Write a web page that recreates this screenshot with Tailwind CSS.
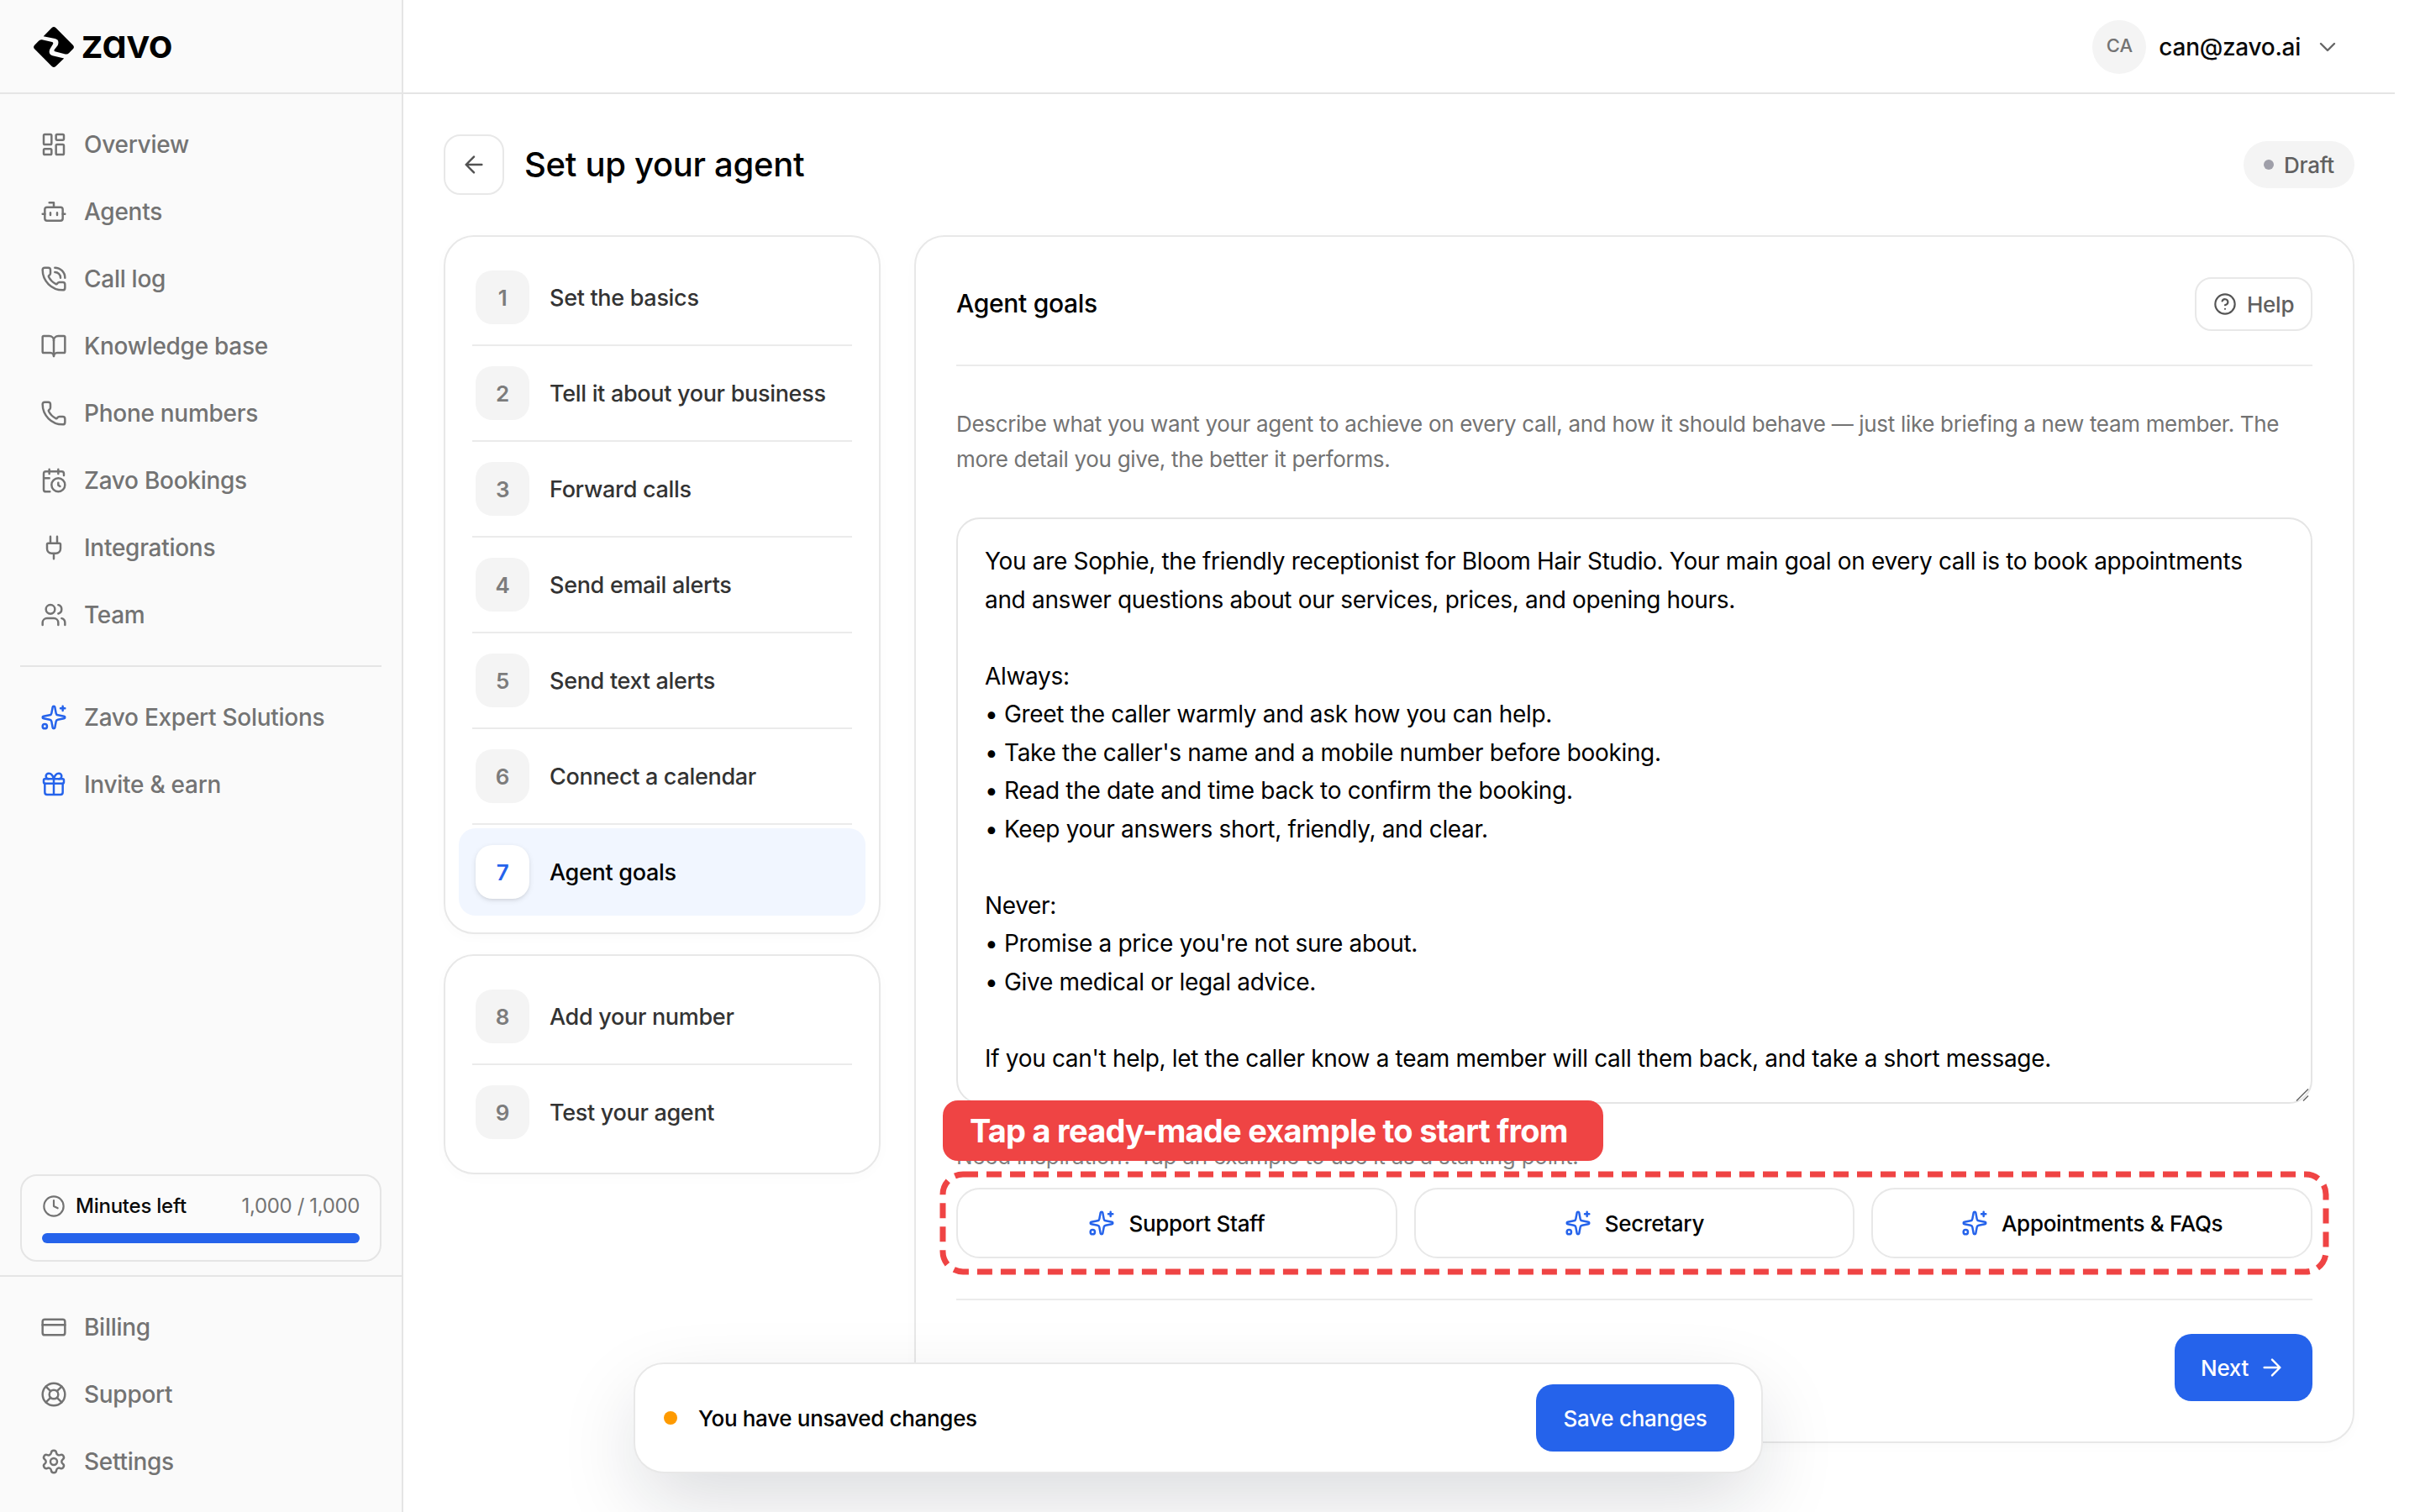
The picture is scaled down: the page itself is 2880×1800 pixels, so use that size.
<!DOCTYPE html>
<html lang="en">
<head>
<meta charset="utf-8">
<title>Zavo – Set up your agent</title>
<script src="https://cdn.jsdelivr.net/npm/@tailwindcss/browser@4"></script>
</head>
<body class="bg-white font-['Inter',sans-serif] text-[#0a0a0a] antialiased">
<!-- Icon sprite -->
<svg class="hidden" xmlns="http://www.w3.org/2000/svg">
  <symbol id="dashboard" viewBox="0 0 24 24"><rect x="3" y="3" width="7" height="9" rx="1"/><rect x="14" y="3" width="7" height="5" rx="1"/><rect x="14" y="12" width="7" height="9" rx="1"/><rect x="3" y="16" width="7" height="5" rx="1"/></symbol>
  <symbol id="bot" viewBox="0 0 24 24"><path d="M12 8V4H8"/><rect x="4" y="8" width="16" height="12" rx="2"/><path d="M2 14h2M20 14h2M15 13v2M9 13v2"/></symbol>
  <symbol id="phone" viewBox="0 0 24 24"><path d="M13.832 16.568a1 1 0 0 0 1.213-.303l.355-.465A2 2 0 0 1 17 15h3a2 2 0 0 1 2 2v3a2 2 0 0 1-2 2A18 18 0 0 1 2 4a2 2 0 0 1 2-2h3a2 2 0 0 1 2 2v3a2 2 0 0 1-.8 1.6l-.468.351a1 1 0 0 0-.292 1.233 14 14 0 0 0 6.392 6.384"/></symbol>
  <symbol id="phone-call" viewBox="0 0 24 24"><path d="M13 2a9 9 0 0 1 9 9M13 6a5 5 0 0 1 5 5"/><path d="M13.832 16.568a1 1 0 0 0 1.213-.303l.355-.465A2 2 0 0 1 17 15h3a2 2 0 0 1 2 2v3a2 2 0 0 1-2 2A18 18 0 0 1 2 4a2 2 0 0 1 2-2h3a2 2 0 0 1 2 2v3a2 2 0 0 1-.8 1.6l-.468.351a1 1 0 0 0-.292 1.233 14 14 0 0 0 6.392 6.384"/></symbol>
  <symbol id="book" viewBox="0 0 24 24"><path d="M12 7v14"/><path d="M3 18a1 1 0 0 1-1-1V4a1 1 0 0 1 1-1h5a4 4 0 0 1 4 4 4 4 0 0 1 4-4h5a1 1 0 0 1 1 1v13a1 1 0 0 1-1 1h-6a3 3 0 0 0-3 3 3 3 0 0 0-3-3z"/></symbol>
  <symbol id="calendar" viewBox="0 0 24 24"><path d="M16 14v2.2l1.6 1M16 2v4M21 7.5V6a2 2 0 0 0-2-2H5a2 2 0 0 0-2 2v14a2 2 0 0 0 2 2h3.5M3 10h5M8 2v4"/><circle cx="16" cy="16" r="6"/></symbol>
  <symbol id="plug" viewBox="0 0 24 24"><path d="M12 22v-5M15 8V2M17 8a1 1 0 0 1 1 1v4a4 4 0 0 1-4 4h-4a4 4 0 0 1-4-4V9a1 1 0 0 1 1-1zM9 8V2"/></symbol>
  <symbol id="users" viewBox="0 0 24 24"><path d="M16 21v-2a4 4 0 0 0-4-4H6a4 4 0 0 0-4 4v2M16 3.128a4 4 0 0 1 0 7.744M22 21v-2a4 4 0 0 0-3-3.87"/><circle cx="9" cy="7" r="4"/></symbol>
  <symbol id="sparkles" viewBox="0 0 24 24"><path d="M11.017 2.814a1 1 0 0 1 1.966 0l1.051 5.558a2 2 0 0 0 1.594 1.594l5.558 1.051a1 1 0 0 1 0 1.966l-5.558 1.051a2 2 0 0 0-1.594 1.594l-1.051 5.558a1 1 0 0 1-1.966 0l-1.051-5.558a2 2 0 0 0-1.594-1.594l-5.558-1.051a1 1 0 0 1 0-1.966l5.558-1.051a2 2 0 0 0 1.594-1.594z"/><path d="M20 2v4M22 4h-4"/><circle cx="4" cy="20" r="2"/></symbol>
  <symbol id="gift" viewBox="0 0 24 24"><path d="M12 7v14M20 11v8a2 2 0 0 1-2 2H6a2 2 0 0 1-2-2v-8M7.5 7a1 1 0 0 1 0-5A4.8 8 0 0 1 12 7a4.8 8 0 0 1 4.5-5 1 1 0 0 1 0 5"/><rect x="3" y="7" width="18" height="4" rx="1"/></symbol>
  <symbol id="clock" viewBox="0 0 24 24"><circle cx="12" cy="12" r="10"/><path d="M12 6v6l4 2"/></symbol>
  <symbol id="card" viewBox="0 0 24 24"><rect x="2" y="5" width="20" height="14" rx="2"/><path d="M2 10h20"/></symbol>
  <symbol id="buoy" viewBox="0 0 24 24"><circle cx="12" cy="12" r="10"/><path d="m4.93 4.93 4.24 4.24M14.83 9.17l4.24-4.24M14.83 14.83l4.24 4.24M9.17 14.83l-4.24 4.24"/><circle cx="12" cy="12" r="4"/></symbol>
  <symbol id="settings" viewBox="0 0 24 24"><path d="M9.671 4.136a2.34 2.34 0 0 1 4.659 0 2.34 2.34 0 0 0 3.319 1.915 2.34 2.34 0 0 1 2.33 4.033 2.34 2.34 0 0 0 0 3.831 2.34 2.34 0 0 1-2.33 4.033 2.34 2.34 0 0 0-3.319 1.915 2.34 2.34 0 0 1-4.659 0 2.34 2.34 0 0 0-3.32-1.915 2.34 2.34 0 0 1-2.33-4.033 2.34 2.34 0 0 0 0-3.831A2.34 2.34 0 0 1 6.35 6.051a2.34 2.34 0 0 0 3.319-1.915"/><circle cx="12" cy="12" r="3"/></symbol>
  <symbol id="help" viewBox="0 0 24 24"><circle cx="12" cy="12" r="10"/><path d="M9.09 9a3 3 0 0 1 5.83 1c0 2-3 3-3 3M12 17h.01"/></symbol>
  <symbol id="chevron" viewBox="0 0 24 24"><path d="m6 9 6 6 6-6"/></symbol>
  <symbol id="arrow-left" viewBox="0 0 24 24"><path d="m12 19-7-7 7-7M19 12H5"/></symbol>
  <symbol id="arrow-right" viewBox="0 0 24 24"><path d="M5 12h14M12 5l7 7-7 7"/></symbol>
</svg>

<div class="relative flex h-[1800px] w-[2880px] overflow-hidden">
  <!-- Sidebar -->
  <aside class="flex w-[480px] shrink-0 flex-col border-r-2 border-[#e5e5e5] bg-[#fafafa]">
    <div class="flex h-[112px] shrink-0 gap-2 border-b-2 border-[#e5e5e5] pl-10 pt-8">
      <svg class="size-12" viewBox="0 0 48 48" fill="#000"><path d="M11.7 11.3 21.7 1.1Q24-1 26.3 1.1L46.9 21.7Q49 24 46.9 26.3L42 31.2Q40.300 33 37.800 32.400L25.400 29.300Q24 28.800 24.600 27.300L28.700 22Q31.200 15.500 25.500 14.100Z"/><path d="M1.100 26.300Q-1 24 1.100 21.700L6 16.700Q7.700 14.800 10 15.300L22 18Q23.900 18.700 23 20.500L19.400 26.500Q17 32.300 22.500 34.200L36.200 37.500 26.300 46.900Q24 49 21.700 46.900Z"/></svg>
      <span class="text-[48px] leading-[40px] font-semibold tracking-[-1px] text-black [font-feature-settings:'cv11']">zavo</span>
    </div>
    <nav class="flex flex-col pl-12 pt-5 text-[28px] font-medium tracking-[-0.01em] text-[#737373]">
      <a class="flex h-20 items-center gap-5"><svg class="size-8 fill-none stroke-current stroke-[1.85] [stroke-linecap:round] [stroke-linejoin:round]"><use href="#dashboard"/></svg>Overview</a>
      <a class="flex h-20 items-center gap-5"><svg class="size-8 fill-none stroke-current stroke-[1.85] [stroke-linecap:round] [stroke-linejoin:round]"><use href="#bot"/></svg>Agents</a>
      <a class="flex h-20 items-center gap-5"><svg class="size-8 fill-none stroke-current stroke-[1.85] [stroke-linecap:round] [stroke-linejoin:round]"><use href="#phone-call"/></svg>Call log</a>
      <a class="flex h-20 items-center gap-5"><svg class="size-8 fill-none stroke-current stroke-[1.85] [stroke-linecap:round] [stroke-linejoin:round]"><use href="#book"/></svg>Knowledge base</a>
      <a class="flex h-20 items-center gap-5"><svg class="size-8 fill-none stroke-current stroke-[1.85] [stroke-linecap:round] [stroke-linejoin:round]"><use href="#phone"/></svg>Phone numbers</a>
      <a class="flex h-20 items-center gap-5"><svg class="size-8 fill-none stroke-current stroke-[1.85] [stroke-linecap:round] [stroke-linejoin:round]"><use href="#calendar"/></svg>Zavo Bookings</a>
      <a class="flex h-20 items-center gap-5"><svg class="size-8 fill-none stroke-current stroke-[1.85] [stroke-linecap:round] [stroke-linejoin:round]"><use href="#plug"/></svg>Integrations</a>
      <a class="flex h-20 items-center gap-5"><svg class="size-8 fill-none stroke-current stroke-[1.85] [stroke-linecap:round] [stroke-linejoin:round]"><use href="#users"/></svg>Team</a>
      <hr class="my-5 -ml-6 mr-6 border-t-2 border-[#e5e5e5]">
      <a class="flex h-20 items-center gap-5"><svg class="size-8 fill-none stroke-[#2563eb] stroke-[1.85] [stroke-linecap:round] [stroke-linejoin:round]"><use href="#sparkles"/></svg>Zavo Expert Solutions</a>
      <a class="flex h-20 items-center gap-5"><svg class="size-8 fill-none stroke-[#2563eb] stroke-[1.85] [stroke-linecap:round] [stroke-linejoin:round]"><use href="#gift"/></svg>Invite &amp; earn</a>
    </nav>
    <div class="mx-6 mt-auto mb-4 flex flex-col gap-4 rounded-[20px] border-2 border-[#e5e5e5] bg-[#fbfbfb] px-6 py-5 text-[24px] leading-8 tracking-[-0.01em]">
      <div class="flex items-center justify-between">
        <span class="flex items-center gap-3 font-medium"><svg class="size-7 fill-none stroke-[#737373] stroke-[1.85] [stroke-linecap:round] [stroke-linejoin:round]"><use href="#clock"/></svg>Minutes left</span>
        <span class="tracking-[-0.015em] text-[#737373]">1,000 / 1,000</span>
      </div>
      <div class="h-3 rounded-full bg-[#2563eb]"></div>
    </div>
    <nav class="flex flex-col border-t-2 border-[#e5e5e5] py-5 pl-12 text-[28px] font-medium tracking-[-0.01em] text-[#737373]">
      <a class="flex h-20 items-center gap-5"><svg class="size-8 fill-none stroke-current stroke-[1.85] [stroke-linecap:round] [stroke-linejoin:round]"><use href="#card"/></svg>Billing</a>
      <a class="flex h-20 items-center gap-5"><svg class="size-8 fill-none stroke-current stroke-[1.85] [stroke-linecap:round] [stroke-linejoin:round]"><use href="#buoy"/></svg>Support</a>
      <a class="flex h-20 items-center gap-5"><svg class="size-8 fill-none stroke-current stroke-[1.85] [stroke-linecap:round] [stroke-linejoin:round]"><use href="#settings"/></svg>Settings</a>
    </nav>
  </aside>

  <div class="flex w-[2370px] flex-col">
    <header class="flex h-[112px] shrink-0 items-start justify-end border-b-2 border-[#e5e5e5] pt-6 pr-16">
      <div class="flex h-16 items-center">
        <span class="mr-[15px] size-16 rounded-full bg-[#f4f4f4] text-center text-[22px] leading-[60px] font-medium text-[#737373]">CA</span>
        <span class="mr-4 text-[28px] font-medium tracking-[-0.01em]">can@zavo.ai</span>
        <svg class="size-8 fill-none stroke-[#666] stroke-[1.85] [stroke-linecap:round] [stroke-linejoin:round]"><use href="#chevron"/></svg>
      </div>
    </header>

    <main class="flex flex-col gap-12 pt-12 pr-12 pl-12">
      <div class="flex h-[72px] items-center gap-6">
        <button class="flex size-[72px] items-center justify-center rounded-[20px] border-2 border-[#e8e8e8]"><svg class="size-8 fill-none stroke-[#525252] stroke-[1.85] [stroke-linecap:round] [stroke-linejoin:round]"><use href="#arrow-left"/></svg></button>
        <h1 class="text-[40px] font-medium tracking-[-0.0075em] text-black">Set up your agent</h1>
        <span class="ml-auto flex h-14 w-[132px] items-center gap-3 rounded-full bg-[#f4f4f4] pl-6 text-[26px] font-medium tracking-[-0.01em] text-[#606060]"><i class="size-3 rounded-full bg-[#9f9fa9]"></i>Draft</span>
      </div>

      <div class="flex items-start gap-10">
        <!-- Setup steps -->
        <div class="flex w-[520px] shrink-0 flex-col gap-6 text-[27px] font-medium tracking-[-0.0115em] text-[#333]">
          <ol class="rounded-[36px] border-2 border-[#e8e8e8] p-4 shadow-[0_4px_16px_rgba(0,0,0,0.02)]">
            <li class="py-1"><div class="flex h-[104px] items-center gap-6 px-5"><b class="flex size-16 items-center justify-center rounded-[20px] bg-[#f4f4f4] text-[26px] font-semibold text-[#7c7c7c]">1</b><span class="pt-0.5">Set the basics</span></div></li>
            <hr class="mx-4 border-t-2 border-[#ebebeb]">
            <li class="py-1"><div class="flex h-[104px] items-center gap-6 px-5"><b class="flex size-16 items-center justify-center rounded-[20px] bg-[#f4f4f4] text-[26px] font-semibold text-[#7c7c7c]">2</b><span class="pt-0.5">Tell it about your business</span></div></li>
            <hr class="mx-4 border-t-2 border-[#ebebeb]">
            <li class="py-1"><div class="flex h-[104px] items-center gap-6 px-5"><b class="flex size-16 items-center justify-center rounded-[20px] bg-[#f4f4f4] text-[26px] font-semibold text-[#7c7c7c]">3</b><span class="pt-0.5">Forward calls</span></div></li>
            <hr class="mx-4 border-t-2 border-[#ebebeb]">
            <li class="py-1"><div class="flex h-[104px] items-center gap-6 px-5"><b class="flex size-16 items-center justify-center rounded-[20px] bg-[#f4f4f4] text-[26px] font-semibold text-[#7c7c7c]">4</b><span class="pt-0.5">Send email alerts</span></div></li>
            <hr class="mx-4 border-t-2 border-[#ebebeb]">
            <li class="py-1"><div class="flex h-[104px] items-center gap-6 px-5"><b class="flex size-16 items-center justify-center rounded-[20px] bg-[#f4f4f4] text-[26px] font-semibold text-[#7c7c7c]">5</b><span class="pt-0.5">Send text alerts</span></div></li>
            <hr class="mx-4 border-t-2 border-[#ebebeb]">
            <li class="py-1"><div class="flex h-[104px] items-center gap-6 px-5"><b class="flex size-16 items-center justify-center rounded-[20px] bg-[#f4f4f4] text-[26px] font-semibold text-[#7c7c7c]">6</b><span class="pt-0.5">Connect a calendar</span></div></li>
            <hr class="mx-4 border-t-2 border-[#ebebeb]">
            <li class="py-1"><div class="flex h-[104px] items-center gap-6 rounded-[20px] bg-[#f1f6ff] px-5 text-black"><b class="flex size-16 items-center justify-center rounded-[20px] bg-white text-[26px] font-semibold text-[#2563eb] shadow-[0_2px_6px_rgba(0,0,0,0.1),0_2px_4px_-2px_rgba(0,0,0,0.1)]">7</b><span class="pt-0.5">Agent goals</span></div></li>
          </ol>
          <ol class="rounded-[36px] border-2 border-[#e8e8e8] p-4 shadow-[0_4px_16px_rgba(0,0,0,0.02)]">
            <li class="py-1"><div class="flex h-[104px] items-center gap-6 px-5"><b class="flex size-16 items-center justify-center rounded-[20px] bg-[#f4f4f4] text-[26px] font-semibold text-[#7c7c7c]">8</b><span class="pt-0.5">Add your number</span></div></li>
            <hr class="mx-4 border-t-2 border-[#ebebeb]">
            <li class="py-1"><div class="flex h-[104px] items-center gap-6 px-5"><b class="flex size-16 items-center justify-center rounded-[20px] bg-[#f4f4f4] text-[26px] font-semibold text-[#7c7c7c]">9</b><span class="pt-0.5">Test your agent</span></div></li>
          </ol>
        </div>

        <!-- Agent goals -->
        <section class="flex h-[1438px] flex-1 flex-col rounded-[36px] border-2 border-[#e8e8e8] px-12 pt-12 shadow-[0_4px_16px_rgba(0,0,0,0.02)]">
          <div class="flex h-[106px] items-start justify-between border-b-2 border-[#ebebeb]">
            <h2 class="text-[30px] leading-[62px] font-medium tracking-[-0.01em] text-black">Agent goals</h2>
            <button class="flex h-16 w-[140px] items-center gap-3 rounded-[20px] border-2 border-[#e8e8e8] pl-5 text-[26px] font-medium tracking-[-0.01em] text-[#606060]"><svg class="size-7 fill-none stroke-[#555] stroke-[1.85] [stroke-linecap:round] [stroke-linejoin:round]"><use href="#help"/></svg>Help</button>
          </div>
          <p class="mt-12 h-[84px] text-[26px] leading-[42px] tracking-[-0.0124em] text-[#737373]">Describe what you want your agent to achieve on every call, and how it should behave — just like briefing a new team member. The<br>more detail you give, the better it performs.</p>
          <div class="relative mt-12 h-[698px] rounded-[28px] border-2 border-[#e5e5e5] px-8 pt-[28px] text-[28px] leading-[45.5px] tracking-[-0.0115em] whitespace-pre text-black">You are Sophie, the friendly receptionist for Bloom Hair Studio. Your main goal on every call is to book appointments
and answer questions about our services, prices, and opening hours.

Always:
• Greet the caller warmly and ask how you can help.
• Take the caller's name and a mobile number before booking.
• Read the date and time back to confirm the booking.
• Keep your answers short, friendly, and clear.

Never:
• Promise a price you're not sure about.
• Give medical or legal advice.

If you can't help, let the caller know a team member will call them back, and take a short message.<svg class="absolute right-0 bottom-0 size-5 stroke-[#666] stroke-[1.5]" viewBox="0 0 20 20"><path d="M3 18.500 17 4.500M11 18.500l6-6"/></svg></div>
          <p class="mt-[42px] h-[42px] text-[26px] leading-[42px] tracking-[-0.0085em] text-[#808080]">Need inspiration? Tap an example to use it as a starting point.</p>
          <div class="mt-4 grid grid-cols-3 gap-5 text-[26px] font-medium tracking-[-0.012em] text-black">
            <button class="flex h-[84px] items-center justify-center gap-4 rounded-[28px] border-2 border-[#e8e8e8]"><svg class="size-8 fill-none stroke-[#2563eb] stroke-[1.85] [stroke-linecap:round] [stroke-linejoin:round]"><use href="#sparkles"/></svg>Support Staff</button>
            <button class="flex h-[84px] items-center justify-center gap-4 rounded-[28px] border-2 border-[#e8e8e8]"><svg class="size-8 fill-none stroke-[#2563eb] stroke-[1.85] [stroke-linecap:round] [stroke-linejoin:round]"><use href="#sparkles"/></svg>Secretary</button>
            <button class="flex h-[84px] items-center justify-center gap-4 rounded-[28px] border-2 border-[#e8e8e8]"><svg class="size-8 fill-none stroke-[#2563eb] stroke-[1.85] [stroke-linecap:round] [stroke-linejoin:round]"><use href="#sparkles"/></svg>Appointments &amp; FAQs</button>
          </div>
          <div class="mt-12 flex justify-end border-t-2 border-[#ebebeb] pt-10">
            <button class="flex h-20 w-[164px] items-center gap-3 rounded-[20px] bg-[#2563eb] pl-[31px] text-[26px] font-medium tracking-[-0.01em] text-white">Next<svg class="size-8 fill-none stroke-current stroke-[1.85] [stroke-linecap:round] [stroke-linejoin:round]"><use href="#arrow-right"/></svg></button>
          </div>
        </section>
      </div>
    </main>
  </div>

  <!-- Unsaved changes toast -->
  <div class="absolute bottom-[46px] left-[754px] flex h-[132px] w-[1344px] items-center rounded-[36px] border-2 border-[#e8e8e8] bg-white pr-8 pl-[34px] text-[26px] font-medium tracking-[-0.0125em] text-black shadow-[0_36px_96px_-10px_rgba(15,23,42,0.17)]">
    <i class="mr-[25px] size-4 rounded-full bg-[#fe9a00]"></i>You have unsaved changes
    <button class="ml-auto h-20 w-[236px] rounded-[20px] bg-[#2563eb] tracking-[-0.01em] text-white">Save changes</button>
  </div>

  <!-- Walkthrough annotation -->
  <div class="absolute top-[1310px] left-[1122px] h-[72px] w-[786px] rounded-[18px] bg-[#ef4444] pl-8 text-[38px] leading-[72px] font-bold tracking-[-0.02em] whitespace-nowrap text-white">Tap a ready-made example to start from</div>
  <svg class="absolute top-[1390px] left-[1114px] h-[132px] w-[1662px] fill-none stroke-[#ef4444] stroke-[7]" viewBox="0 0 1662 132"><rect x="8" y="8" width="1646" height="116" rx="24" stroke-dasharray="18 10"/></svg>
</div>
</body>
</html>
